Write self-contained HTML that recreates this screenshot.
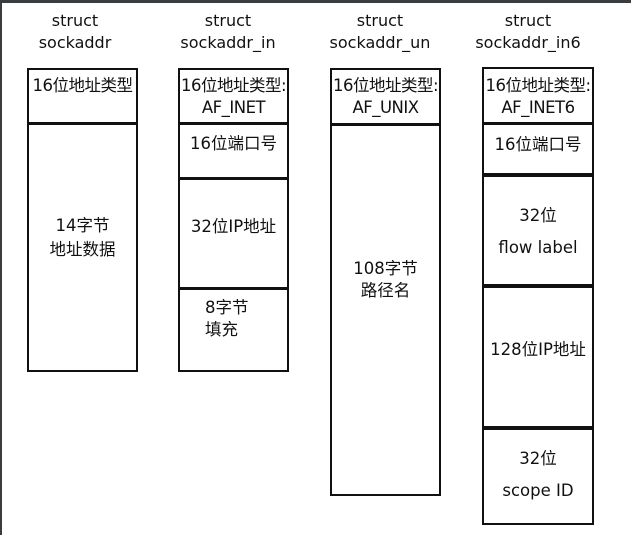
<!DOCTYPE html>
<html><head><meta charset="utf-8"><style>
body{margin:0;width:631px;height:535px;background:#fff;position:relative;overflow:hidden;font-family:"DejaVu Sans","Noto Sans CJK SC",sans-serif;color:#111}
.top{position:absolute;left:0;top:0;width:631px;height:3px;background:#3a3d40}
.left{position:absolute;left:0;top:0;width:2px;height:535px;background:#3a3d40}
.b{position:absolute;border:2px solid #111;box-sizing:border-box}
.h{position:absolute;height:3px;background:#111}
.t{position:absolute;font-size:16.5px;text-align:center;line-height:22px;white-space:nowrap}
.title{position:absolute;font-size:16px;text-align:center;line-height:22px;width:150px}
</style></head><body>
<div class="top"></div><div class="left"></div>

<div class="title" style="left:0;top:10px">struct<br>sockaddr</div>
<div class="title" style="left:153px;top:10px">struct<br>sockaddr_in</div>
<div class="title" style="left:305px;top:10px">struct<br>sockaddr_un</div>
<div class="title" style="left:453px;top:10px">struct<br>sockaddr_in6</div>

<div class="b" style="left:27px;top:68px;width:111px;height:304px"></div>
<div class="h" style="left:27px;top:122px;width:111px"></div>
<div class="t" style="left:27px;top:75px;width:111px;letter-spacing:-0.5px">16位地址类型</div>
<div class="t" style="left:27px;top:214px;width:111px;line-height:24px">14字节<br>地址数据</div>

<div class="b" style="left:178px;top:68px;width:111px;height:304px"></div>
<div class="h" style="left:178px;top:122px;width:111px"></div>
<div class="h" style="left:178px;top:177px;width:111px"></div>
<div class="h" style="left:178px;top:287px;width:111px"></div>
<div class="t" style="left:176px;top:75px;width:115px;letter-spacing:-0.5px">16位地址类型:<br>AF_INET</div>
<div class="t" style="left:178px;top:133px;width:111px">16位端口号</div>
<div class="t" style="left:178px;top:216px;width:111px">32位IP地址</div>
<div class="t" style="left:205px;top:297px;text-align:left">8字节<br>填充</div>

<div class="b" style="left:330px;top:68px;width:111px;height:428px"></div>
<div class="h" style="left:330px;top:123px;width:111px"></div>
<div class="t" style="left:328px;top:75px;width:115px;letter-spacing:-0.5px">16位地址类型:<br>AF_UNIX</div>
<div class="t" style="left:330px;top:258px;width:111px">108字节<br>路径名</div>

<div class="b" style="left:482px;top:67px;width:112px;height:458px"></div>
<div class="h" style="left:482px;top:122px;width:112px"></div>
<div class="h" style="left:482px;top:173px;width:112px;height:4px"></div>
<div class="h" style="left:482px;top:284px;width:112px;height:4px"></div>
<div class="h" style="left:482px;top:426px;width:112px;height:4px"></div>
<div class="t" style="left:480px;top:75px;width:116px;letter-spacing:-0.5px">16位地址类型:<br>AF_INET6</div>
<div class="t" style="left:482px;top:134px;width:112px">16位端口号</div>
<div class="t" style="left:482px;top:200px;width:112px;line-height:32px">32位<br>flow label</div>
<div class="t" style="left:482px;top:339px;width:112px">128位IP地址</div>
<div class="t" style="left:482px;top:443px;width:112px;line-height:32px">32位<br>scope ID</div>
</body></html>
